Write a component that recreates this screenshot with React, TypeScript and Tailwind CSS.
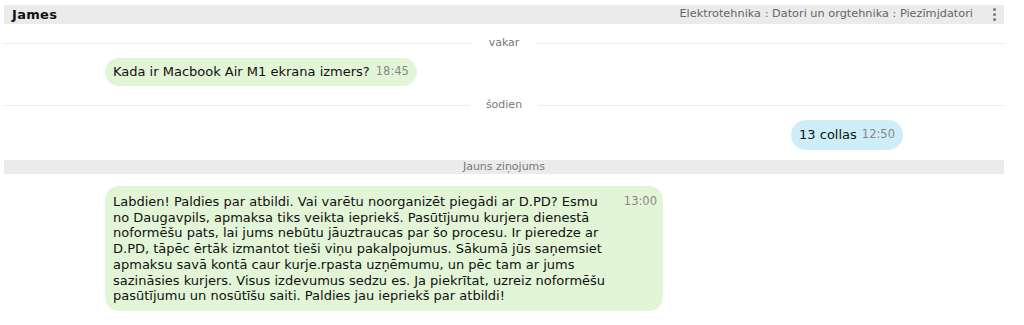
const lines = [
  'Labdien! Paldies par atbildi. Vai varētu noorganizēt piegādi ar D.PD? Esmu',
  'no Daugavpils, apmaksa tiks veikta iepriekš. Pasūtījumu kurjera dienestā',
  'noformēšu pats, lai jums nebūtu jāuztraucas par šo procesu. Ir pieredze ar',
  'D.PD, tāpēc ērtāk izmantot tieši viņu pakalpojumus. Sākumā jūs saņemsiet',
  'apmaksu savā kontā caur kurje.rpasta uzņēmumu, un pēc tam ar jums',
  'sazināsies kurjers. Visus izdevumus sedzu es. Ja piekrītat, uzreiz noformēšu',
  'pasūtījumu un nosūtīšu saiti. Paldies jau iepriekš par atbildi!',
]

function DayDivider({ label }: { label: string }) {
  return (
    <div className="flex items-center h-[14px]">
      <div className="flex-1 border-t border-[#ececec]" />
      <span className="px-[16px] text-[11px] text-[#777]">{label}</span>
      <div className="flex-1 border-t border-[#ececec]" />
    </div>
  )
}

export default function App() {
  return (
    <div
      className="w-[1024px] h-[325px] bg-white px-[4px] pt-[5px] text-[13px] text-[#111]"
      style={{ fontFamily: '"DejaVu Sans", Verdana, sans-serif' }}
    >
      <div className="w-[1000px]">
        <div className="flex items-center justify-between h-[19px] bg-[#ebebeb] pl-[8px] pr-[8px]">
          <span className="font-bold text-[13px] tracking-[0.3px]">James</span>
          <div className="flex items-center gap-[20px]">
            <span className="text-[11.3px] text-[#666]">
              Elektrotehnika : Datori un orgtehnika : Piezīmjdatori
            </span>
            <span className="flex flex-col gap-[2px]">
              <span className="w-[3px] h-[3px] rounded-full bg-[#777]" />
              <span className="w-[3px] h-[3px] rounded-full bg-[#777]" />
              <span className="w-[3px] h-[3px] rounded-full bg-[#777]" />
            </span>
          </div>
        </div>

        <div className="mt-[12px]">
          <DayDivider label="vakar" />
        </div>

        <div className="mt-[8px] pl-[101px] flex">
          <div className="flex gap-[6px] h-[28px] items-center rounded-[14px] bg-[#e3f5d7] pl-[8px] pr-[8px]">
            <span>Kada ir Macbook Air M1 ekrana izmers?</span>
            <span className="text-[11.5px] text-[#888]">18:45</span>
          </div>
        </div>

        <div className="mt-[12px]">
          <DayDivider label="šodien" />
        </div>

        <div className="mt-[8px] flex justify-end pr-[101px]">
          <div className="flex items-center gap-[5px] h-[30px] rounded-[15px] bg-[#cdeef8] pl-[8px] pr-[8px]">
            <span>13 collas</span>
            <span className="text-[11.5px] text-[#888]">12:50</span>
          </div>
        </div>

        <div className="mt-[10px] h-[14px] bg-[#ebebeb] flex items-center justify-center text-[11px] text-[#777]">
          Jauns ziņojums
        </div>

        <div className="mt-[12px] pl-[101px] flex">
          <div className="w-[558px] rounded-[14px] bg-[#e3f5d7] pl-[8px] pr-[6px] pt-[8px] pb-[7px] flex justify-between">
            <div className="leading-[15.7px]">
              {lines.map((l) => (
                <div key={l} className="whitespace-nowrap">{l}</div>
              ))}
            </div>
            <span className="text-[11.5px] text-[#888] leading-[15.7px]">13:00</span>
          </div>
        </div>
      </div>
    </div>
  )
}
